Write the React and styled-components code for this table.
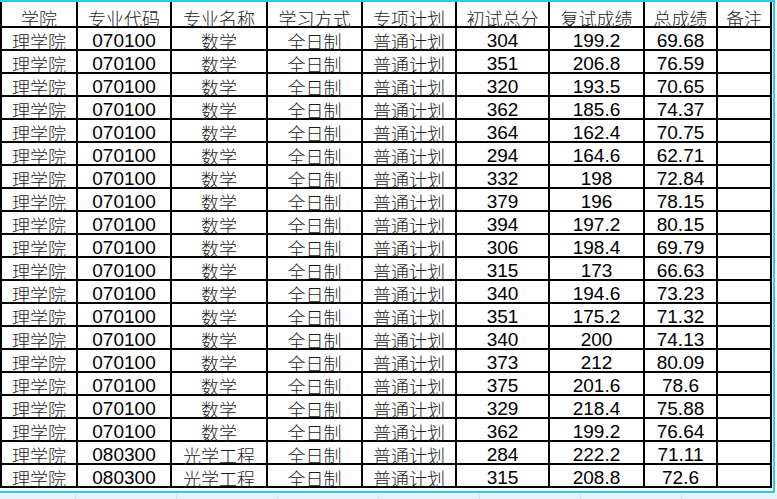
import React from 'react';
import styled, { createGlobalStyle } from 'styled-components';

const GlobalStyle = createGlobalStyle`
  html, body {
    margin: 0;
    padding: 0;
    background: #ffffff;
  }
`;

const COLUMNS = [
  { key: 'school', label: '学院', width: 76 },
  { key: 'code', label: '专业代码', width: 94 },
  { key: 'major', label: '专业名称', width: 96 },
  { key: 'mode', label: '学习方式', width: 95 },
  { key: 'plan', label: '专项计划', width: 94 },
  { key: 'first', label: '初试总分', width: 93 },
  { key: 'second', label: '复试成绩', width: 95 },
  { key: 'total', label: '总成绩', width: 73 },
  { key: 'note', label: '备注', width: 54 },
];

const NUMERIC = ['code', 'first', 'second', 'total'];

const raw = [
  ['070100', '数学', 304, '199.2', '69.68'],
  ['070100', '数学', 351, '206.8', '76.59'],
  ['070100', '数学', 320, '193.5', '70.65'],
  ['070100', '数学', 362, '185.6', '74.37'],
  ['070100', '数学', 364, '162.4', '70.75'],
  ['070100', '数学', 294, '164.6', '62.71'],
  ['070100', '数学', 332, '198', '72.84'],
  ['070100', '数学', 379, '196', '78.15'],
  ['070100', '数学', 394, '197.2', '80.15'],
  ['070100', '数学', 306, '198.4', '69.79'],
  ['070100', '数学', 315, '173', '66.63'],
  ['070100', '数学', 340, '194.6', '73.23'],
  ['070100', '数学', 351, '175.2', '71.32'],
  ['070100', '数学', 340, '200', '74.13'],
  ['070100', '数学', 373, '212', '80.09'],
  ['070100', '数学', 375, '201.6', '78.6'],
  ['070100', '数学', 329, '218.4', '75.88'],
  ['070100', '数学', 362, '199.2', '76.64'],
  ['080300', '光学工程', 284, '222.2', '71.11'],
  ['080300', '光学工程', 315, '208.8', '72.6'],
];

const rows = raw.map(([code, major, first, second, total], i) => ({
  id: `r${i}`,
  school: '理学院',
  code,
  major,
  mode: '全日制',
  plan: '普通计划',
  first: String(first),
  second,
  total,
  note: '',
}));

const Page = styled.div`
  width: 777px;
  height: 499px;
  overflow: hidden;
  display: flex;
  flex-direction: column;
  background: #ffffff;
`;

const Selection = styled.div`
  width: 775px;
  box-sizing: border-box;
  border-top: 2px solid #22cdf0;
  border-right: 2px solid #22cdf0;
  border-bottom: 2px solid #22cdf0;
  padding: 0 2px 3px 0;
  background: #ffffff;
`;

const Sheet = styled.table`
  width: 771px;
  table-layout: fixed;
  border-collapse: collapse;
  border-style: hidden solid solid solid;
  border-width: 2px;
  border-color: #000000;
`;

const cjk = "'Noto Sans CJK SC', 'Noto Sans', sans-serif";

const HeadCell = styled.th`
  height: 16px;
  padding: 8px 0 0;
  border: 2px solid #000000;
  border-top: none;
  font-family: ${cjk};
  font-weight: 300;
  font-size: 18px;
  line-height: 16px;
  color: #1c1c1c;
  text-align: center;
  white-space: nowrap;
`;

const Cell = styled.td`
  height: 16px;
  padding: 5px 0 0;
  border: 2px solid #000000;
  font-family: ${(p) =>
    p.$numeric ? "'Liberation Sans', Arial, sans-serif" : cjk};
  font-weight: ${(p) => (p.$numeric ? 400 : 300)};
  font-size: ${(p) => (p.$numeric ? '19px' : '18px')};
  line-height: 16px;
  color: ${(p) => (p.$numeric ? '#000000' : '#1c1c1c')};
  text-align: center;
  white-space: nowrap;
`;

const Below = styled.div`
  flex: 1;
  margin-top: 1px;
  display: flex;
  background: #e7f1fb;
`;

const GhostCol = styled.div`
  width: ${(p) => p.$w}px;
  flex-shrink: 0;
  border-right: 1px solid #d3e3f2;
`;

const App = () => (
  <>
    <GlobalStyle />
    <Page>
      <Selection>
        <Sheet>
          <colgroup>
            {COLUMNS.map((c) => (
              <col key={c.key} style={{ width: c.width }} />
            ))}
          </colgroup>
          <thead>
            <tr>
              {COLUMNS.map((c) => (
                <HeadCell key={c.key}>{c.label}</HeadCell>
              ))}
            </tr>
          </thead>
          <tbody>
            {rows.map((row) => (
              <tr key={row.id}>
                {COLUMNS.map((c) => (
                  <Cell key={c.key} $numeric={NUMERIC.includes(c.key)}>
                    {row[c.key]}
                  </Cell>
                ))}
              </tr>
            ))}
          </tbody>
        </Sheet>
      </Selection>
      <Below>
        <GhostCol $w={75} />
        <GhostCol $w={100} />
        <GhostCol $w={100} />
        <GhostCol $w={100} />
        <GhostCol $w={100} />
        <GhostCol $w={100} />
        <GhostCol $w={100} />
      </Below>
    </Page>
  </>
);

export default App;
